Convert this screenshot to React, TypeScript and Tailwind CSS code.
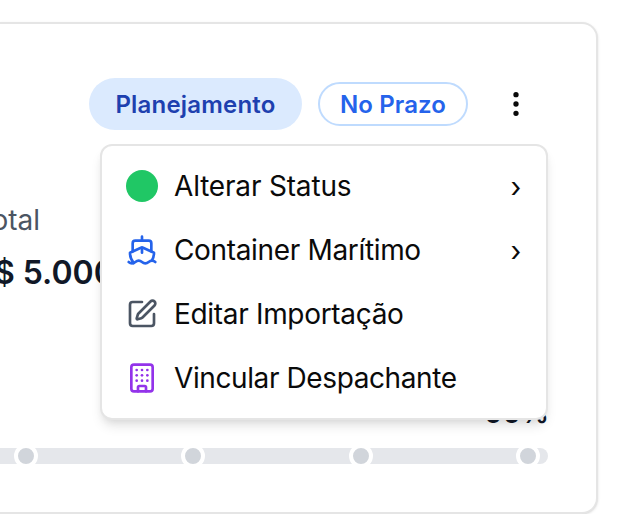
import { Building, EllipsisVertical, Ship, SquarePen } from "lucide-react";
import type { ReactNode } from "react";

function MenuItem({ icon, label, spacing, submenu = false }: { icon: ReactNode; label: string; spacing: string; submenu?: boolean }) {
  return (
    <button className="flex h-16 w-full items-center gap-4 pl-4 text-left text-[28px] leading-10 text-[#0a0a0a]">
      {icon}
      <span className={`whitespace-nowrap ${spacing}`}>{label}</span>
      {submenu && <span className="mr-1.5 ml-auto w-8 pt-px text-center">›</span>}
    </button>
  );
}

function Step() {
  return <span className="size-6 shrink-0 rounded-full border-4 border-white bg-[#d1d5db]" />;
}

export default function App() {
  return (
    <main className="h-[514px] w-[642px] overflow-hidden bg-white pt-[22px] font-['Inter',sans-serif]">
      <section className="relative h-[492px] w-[598px] rounded-r-2xl border-2 border-l-0 border-[#e5e5e5] bg-white pr-12 shadow-sm">
        <header className="flex items-center justify-end gap-4 pt-[54px]">
          <span className="flex h-[52px] w-[213px] items-center justify-center rounded-full bg-[#dbeafe] pt-0.5 text-2xl font-semibold tracking-[0.2px] text-[#1e40af]">
            Planejamento
          </span>
          <span className="flex h-11 w-[150px] items-center justify-center rounded-full border-2 border-[#bfdbfe] pt-0.5 text-2xl font-semibold tracking-[0.1px] text-[#2563eb]">
            No Prazo
          </span>
          <button className="flex h-[52px] w-16 items-center justify-center text-[#0a0a0a]">
            <EllipsisVertical size={32} />
          </button>
        </header>

        <div className="mt-[70px] w-[200px] whitespace-nowrap">
          <p className="flex w-10 justify-end text-[28px] leading-10 text-[#4b5563]">Total</p>
          <p className="mt-2 -ml-[27px] pt-px text-[32px] leading-12 font-semibold text-[#111827]">R$ 5.000,00</p>
        </div>

        <div className="-mr-px mt-[96px] flex justify-end text-[28px] leading-10 font-semibold text-[#111827]">00%</div>

        <div className="mt-[15px] flex h-4 items-center justify-between rounded-r-full bg-[#e5e7eb] pr-2 pl-[14px]">
          <Step />
          <Step />
          <Step />
          <Step />
        </div>

        <nav className="absolute top-[120px] right-12 h-[276px] w-[448px] rounded-xl border-2 border-[#e5e5e5] bg-white p-2 shadow-[0_8px_12px_-2px_rgba(0,0,0,0.1),0_4px_8px_-4px_rgba(0,0,0,0.1)]">
          <MenuItem icon={<span className="size-8 shrink-0 rounded-full bg-[#20c765]" />} label="Alterar Status" spacing="tracking-[-0.18px]" submenu />
          <MenuItem icon={<Ship size={32} className="shrink-0 text-[#2563eb]" />} label="Container Marítimo" spacing="tracking-[-0.34px]" submenu />
          <MenuItem icon={<SquarePen size={32} className="shrink-0 text-[#4b5563]" />} label="Editar Importação" spacing="tracking-[-0.32px]" />
          <MenuItem icon={<Building size={32} className="shrink-0 text-[#9333ea]" />} label="Vincular Despachante" spacing="tracking-[-0.4px]" />
        </nav>
      </section>
    </main>
  );
}
